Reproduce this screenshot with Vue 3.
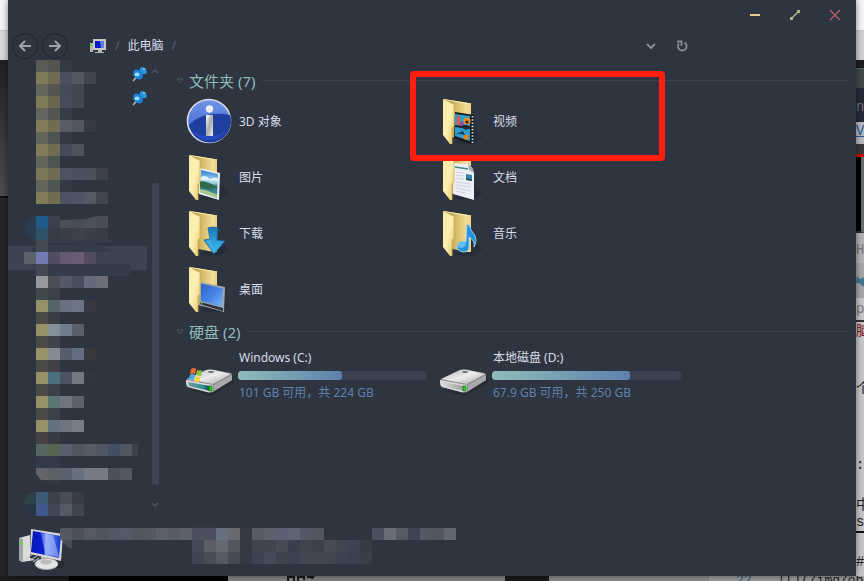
<script setup>
const cell = 12

// Each row: [y, x of the first cell, colours]. An empty string leaves a gap.
const sideRows = [
  [60, 36, ['#5a5b55', '#53544f', '#343a46']],
  [72, 36, ['#7f7a57', '#706b52', '#4b5060', '#535865', '#42454f']],
  [84, 36, ['#65675e', '#56554f', '#464b5a', '#424751']],
  [96, 36, ['#7f7a57', '#6b664f', '#474c5b', '#424751']],
  [108, 36, ['#63665f', '#525550', '#363c48']],
  [120, 36, ['#827c5a', '#726d52', '#575c65', '#525662', '#363a46']],
  [132, 36, ['#62655c', '#4e5550', '#343945']],
  [144, 36, ['#827c5a', '#726d52', '#464b5a', '#4d525e']],
  [156, 36, ['#62655c', '#4e5550']],
  [168, 36, ['#7d775a', '#706b52', '#4c5260', '#4b5060', '#4b515d', '#3e404a']],
  [180, 36, ['#62655c', '#4f5550', '#343945']],
  [192, 36, ['#827c5a', '#726d52', '#4c5261', '#4e5365', '#545b64', '#43464f']],
  [216, 36, ['#1f5c8c', '#3a404e', '#4b4e58', '#494d56', '#4c5059', '#4a4d56']],
  [228, 36, ['#2e5268', '#363c48', '#393e49', '#3f404a', '#3a3f4a', '#393c46']],
  [252, 24, ['#5a636b', '#737bb5', '#514d62', '#655a72', '#6c5a76', '#524c5e']],
  [276, 36, ['#97999d', '#4b4e57', '#545969', '#484e5b', '#646b7c', '#6c6f78']],
  [288, 36, ['#414a4b', '#3d4048']],
  [300, 36, ['#979069', '#536568', '#69717f', '#6c7487', '#383940']],
  [312, 36, ['#4b4b45', '#3c3e45']],
  [324, 36, ['#979069', '#839097', '#6f7e8e', '#5c5e6a']],
  [336, 36, ['#4b4b45', '#40434a']],
  [348, 36, ['#9a926b', '#848b93', '#585d6b', '#646e82', '#38393f']],
  [360, 36, ['#4b4b45', '#3f4147']],
  [372, 36, ['#979069', '#4b717e', '#4d5363', '#737983', '#32363f']],
  [384, 36, ['#4b4b45', '#3a4148']],
  [396, 36, ['#979069', '#5c7472', '#6f7480', '#5c616d']],
  [408, 36, ['#4b4b45', '#3b4146']],
  [420, 36, ['#979069', '#63727f', '#6f7480', '#787e89']],
  [432, 36, ['#454145', '#363b45']],
  [444, 36, ['#566562', '#56664f', '#575f6d', '#505662', '#565b66', '#505662', '#424e63', '#52565f']],
  [456, 36, ['#343a47', '#343a47']],
  [468, 36, ['', '#5b6165', '#5a616e', '#66707f', '#777b86', '#777b86', '#4c515c', '#535862']],
  [492, 36, ['#3e5b75', '#3c414e', '#484d59', '#393d49']],
  [504, 36, ['#40598c', '#404757', '#555b66', '#404550']],
]

const footRows = [
  [528, 72, ['#4c505a', '#555a66', '#50545f', '#535866', '#555a68', '#51565f', '#555965', '#5b606b', '#575b65', '#5c6169', '#4b4f5e', '#4b4f5e', '#667080', '#696b70', '#353945', '#565b65', '#5b606b', '#5c6072', '#5f6472', '#535766', '#53565e', '', '', '', '', '#4c505e', '#696d7a', '#565a63', '#3e4554', '#555966', '#52565e', '#626673']],
  [540, 192, ['#424a59', '#5c5e65', '#666970', '#52565e', '#353945', '#41444f', '#414450', '#474b57', '#393f4d', '#41434e', '#3d404b', '#484a57', '#424653', '#3c4352', '#383b46']],
  [552, 192, ['#3f4453', '#484d58', '#555a66', '#474a55', '#353945', '#3d4353', '#464b59', '#3e4350', '#3b4252', '#444753', '#444753', '#424552', '#3d4150', '#3b4050']],
]

const toCells = (rows) =>
  rows.flatMap(([y, x, colours]) =>
    colours.map((fill, i) => ({ x: x + i * cell, y, fill })).filter((c) => c.fill)
  )
const sideCells = toCells(sideRows)
const footCells = toCells(footRows)

const folders = [
  { name: '3D 对象', icon: 'info' },
  { name: '视频', icon: 'video', marked: true },
  { name: '图片', icon: 'picture' },
  { name: '文档', icon: 'document' },
  { name: '下载', icon: 'download' },
  { name: '音乐', icon: 'music' },
  { name: '桌面', icon: 'desktop' },
]

const drives = [
  { name: 'Windows (C:)', used: 55, info: '101 GB 可用，共 224 GB', system: true },
  { name: '本地磁盘 (D:)', used: 73, info: '67.9 GB 可用，共 250 GB', system: false },
]
</script>

<template>
  <div class="desktop">
    <svg class="defs" width="0" height="0" aria-hidden="true">
      <defs>
        <linearGradient id="flap" x1="0" y1="0" x2="1" y2="1">
          <stop offset="0" stop-color="#f9e9a4" /><stop offset=".5" stop-color="#fdf0b4" /><stop offset="1" stop-color="#e5c867" />
        </linearGradient>
        <linearGradient id="back" x1="0" y1="0" x2="1" y2="0">
          <stop offset="0" stop-color="#a78f48" /><stop offset=".55" stop-color="#d8bf6c" /><stop offset="1" stop-color="#f3e09a" />
        </linearGradient>
        <linearGradient id="infoBlue" x1="0" y1="0" x2="0" y2="1">
          <stop offset="0" stop-color="#6f97ea" /><stop offset="1" stop-color="#3657c4" />
        </linearGradient>
        <linearGradient id="silver" x1="0" y1="0" x2="1" y2="1">
          <stop offset="0" stop-color="#fff" /><stop offset=".5" stop-color="#aaa" /><stop offset="1" stop-color="#eee" />
        </linearGradient>
        <linearGradient id="sky" x1="0" y1="0" x2="0" y2="1">
          <stop offset="0" stop-color="#3c7fd0" /><stop offset=".45" stop-color="#a9dcef" /><stop offset=".6" stop-color="#2c6f7d" /><stop offset="1" stop-color="#4da9b4" />
        </linearGradient>
        <linearGradient id="arrow" x1="0" y1="0" x2="0" y2="1">
          <stop offset="0" stop-color="#1b78b8" /><stop offset="1" stop-color="#3cc0f5" />
        </linearGradient>
        <linearGradient id="screen" x1="0" y1="0" x2="1" y2="1">
          <stop offset="0" stop-color="#2f62c4" /><stop offset=".5" stop-color="#4583e4" /><stop offset="1" stop-color="#7db4f4" />
        </linearGradient>
        <linearGradient id="crt" x1="0" y1="0" x2="1" y2="0">
          <stop offset="0" stop-color="#0716b8" /><stop offset=".42" stop-color="#0a1fd2" /><stop offset=".5" stop-color="#7e9bef" /><stop offset="1" stop-color="#1233d8" />
        </linearGradient>
        <linearGradient id="steel" x1="0" y1="0" x2="1" y2="1">
          <stop offset="0" stop-color="#b4b4b6" /><stop offset=".5" stop-color="#ececec" /><stop offset="1" stop-color="#a4a4a4" />
        </linearGradient>
        <linearGradient id="front" x1="0" y1="0" x2="1" y2="0">
          <stop offset="0" stop-color="#d9d9de" /><stop offset="1" stop-color="#9a9a9f" />
        </linearGradient>
        <linearGradient id="frontC" x1="0" y1="0" x2="1" y2="0">
          <stop offset="0" stop-color="#6c9a9e" /><stop offset=".7" stop-color="#2d8b94" /><stop offset="1" stop-color="#234" />
        </linearGradient>
      </defs>
    </svg>

    <div class="edge edge-left" aria-hidden="true">
      <i class="l-top"></i><i class="l-tab"></i><i class="l-shade"></i><i class="l-dark"></i>
    </div>

    <main class="window">
      <header class="titlebar">
        <button class="win-btn" aria-label="最小化">
          <svg width="12" height="12"><path d="M1 6H11" stroke="#ebcb8b" stroke-width="2" /></svg>
        </button>
        <button class="win-btn" aria-label="最大化">
          <svg width="12" height="12"><path d="M2 10L10 2" stroke="#a3be8c" stroke-width="1.4" /><path d="M1 8h3v3H1zM8 1h3v3H8z" fill="#a3be8c" /></svg>
        </button>
        <button class="win-btn" aria-label="关闭">
          <svg width="12" height="12"><path d="M1 1L11 11M11 1L1 11" stroke="#bf616a" stroke-width="1.2" /></svg>
        </button>
      </header>

      <div class="address">
        <button class="round" aria-label="后退">
          <svg width="16" height="14" fill="none" stroke="#a0a3a9" stroke-width="2"><path d="M14 7H3M8 2L3 7L8 12" /></svg>
        </button>
        <button class="round" aria-label="前进">
          <svg width="16" height="14" fill="none" stroke="#a0a3a9" stroke-width="2"><path d="M2 7H13M8 2L13 7L8 12" /></svg>
        </button>
        <nav class="crumbs">
          <svg width="18" height="16" viewBox="0 0 18 16">
            <path d="M1 5h3v9H1z" fill="#b5b5b0" /><path d="M1 6h2v2H1z" fill="#38e63c" />
            <path d="M4 1h13v11H4z" fill="#c9c8c0" /><path d="M6 3h9v7H6z" fill="#0a18c8" /><path d="M11 3h4v7h-3z" fill="#5d7ce6" />
            <path d="M9 12h4v2h2v1H6v-1h3z" fill="#b7b6af" />
          </svg>
          <span class="slash">/</span>
          <a href="#">此电脑</a>
          <span class="slash">/</span>
        </nav>
        <button class="tool" aria-label="历史记录">
          <svg width="12" height="12" fill="none" stroke="#898c92" stroke-width="2"><path d="M2 4L6 8L10 4" /></svg>
        </button>
        <button class="tool" aria-label="刷新">
          <svg width="12" height="12" fill="none" stroke="#898c92" stroke-width="1.8"><path d="M8.500 2.500A4.300 4.300 0 1 1 3 3.500M1 1.500H5.500V6" /></svg>
        </button>
      </div>

      <div class="body">
        <aside class="sidebar">
          <svg class="mosaic" width="139" height="462" viewBox="8 60 139 462" shape-rendering="crispEdges">
            <rect x="4" y="246" width="143" height="24" rx="2" fill="#3c4353" />
            <path d="M36 216A11 12 0 0 0 36 240z" fill="#2a3c50" shape-rendering="auto" />
            <path d="M30 252C34 242 60 246 92 243C104 247 112 250 116 252zM32 264H130V272Q130 276 126 276H32L40 270z" fill="#343b49" shape-rendering="auto" />
            <path d="M36 240h12v12H36zM36 264h12v12H36z" fill="#444854" />
            <path d="M48 240h60l9 1-8 2H48z" fill="#353b48" />
            <path d="M36 468h12v12h-7l-5-6z" fill="#626469" shape-rendering="auto" />
            <path d="M41 480h19v6z" fill="#353b46" shape-rendering="auto" />
            <path d="M132 444h6v12h-6z" fill="#3e424c" />
            <path d="M36 492Q24 493 24 504H36z" fill="#2e4249" shape-rendering="auto" />
            <path d="M36 516Q25 515 24 504H36z" fill="#263846" shape-rendering="auto" />
            <rect v-for="(c, i) in sideCells" :key="i" :x="c.x" :y="c.y" width="12" height="12" :fill="c.fill" />
            <path d="M60 216h36l-10 3-26 1z" fill="#2e3440" shape-rendering="auto" />
          </svg>
          <div class="pins">
            <svg v-for="n in 2" :key="n" width="16" height="16" viewBox="0 0 16 16">
              <path d="M2 15L7 9" stroke="#b9bcc0" stroke-width="1.5" />
              <path d="M7 6L10 3L14 6L10 10z" fill="#176db5" />
              <path d="M9 2Q11 0 14 2Q17 5 15 8L12 8Q8 6 9 2z" fill="#2a93e0" />
              <ellipse cx="7" cy="8.500" rx="5.500" ry="4.200" transform="rotate(45 7 8.500)" fill="#1b84d8" />
              <ellipse cx="6" cy="8.500" rx="2.500" ry="2" fill="#9fdcff" /><circle cx="13" cy="3" r="1" fill="#8ccdf7" />
            </svg>
          </div>
          <div class="scroll">
            <svg width="8" height="6" fill="none" stroke="#454c5b" stroke-width="2"><path d="M1 5L4 2L7 5" /></svg>
            <i class="thumb"></i>
            <svg width="8" height="6" fill="none" stroke="#454c5b" stroke-width="2"><path d="M1 1L4 4L7 1" /></svg>
          </div>
        </aside>

        <section class="content">
          <h2 class="group">
            <svg width="8" height="6" fill="none" stroke="#4a5161"><path d="M1 1H7L4 5z" /></svg>
            文件夹 (7)
          </h2>
          <div class="tiles">
            <a v-for="f in folders" :key="f.name" class="tile" href="#">
              <svg width="48" height="48" viewBox="0 0 48 48">
                <template v-if="f.icon === 'info'">
                  <circle cx="23" cy="24" r="21.500" fill="url(#infoBlue)" stroke="#dcdde2" stroke-width="1.600" />
                  <path d="M3 28C14 17 28 15 44 18A21 21 0 0 1 4 31z" fill="#1f3f9f" />
                  <path d="M5 33A21 21 0 0 0 42 31C35 41 15 42 5 33z" fill="#2c4fd0" opacity=".7" />
                  <circle cx="23.500" cy="12" r="3.700" fill="#ededee" /><path d="M20 18h7v21h-7z" fill="url(#silver)" />
                </template>
                <template v-else>
                  <path d="M14 46L34 47L42 40L33 30z" fill="#1f242d" opacity=".4" />
                  <path d="M4 2L28 6V43L12 40z" fill="url(#back)" />
                  <path d="M4 2L28 6V7L5 3z" fill="#fff0b5" />
                  <path d="M28 6h3v37h-3z" fill="#ecd589" />
                  <g v-if="f.icon === 'picture'">
                    <path d="M14 15L34 20L33 47L13 41z" fill="#e9eef0" />
                    <path d="M15 17L32 21L31 45L14 39z" fill="url(#sky)" />
                    <path d="M15 24Q20 21 24 26Q29 23 32 26V28L15 27z" fill="#e1f3f5" />
                    <path d="M14 28Q22 28 31 34L24 36L14 34z" fill="#2f6b48" />
                    <path d="M14 36Q22 37 31 42V45L14 39z" fill="#a9c98b" />
                  </g>
                  <g v-else-if="f.icon === 'video'">
                    <path d="M15 15L34 18V45L31 47L14 41z" fill="#151b20" />
                    <path d="M15 17L30 19V30L15 28z" fill="#2c9ed0" /><path d="M15 30L30 32V44L15 39z" fill="#2c9ed0" />
                    <circle cx="27" cy="24" r="3.600" fill="#ee8b22" /><circle cx="27" cy="25" r="1.500" fill="#1b2024" />
                    <path d="M17 20l3-2v10h-3z" fill="#e1584a" /><path d="M20 25l3-1 1 4-4 1z" fill="#8b4fa0" /><path d="M23 28h4l4 2-5 3-4-2z" fill="#242a2d" />
                    <circle cx="26" cy="40" r="2.600" fill="#e6811c" /><path d="M16 37l7-3 2 4-4-1z" fill="#173c59" />
                    <path d="M32.500 19V46" stroke="#d6ded2" stroke-width="1.800" stroke-dasharray="1.600 1.600" />
                  </g>
                  <g v-else-if="f.icon === 'document'">
                    <path d="M14 10L28 11Q33 14 34 20V47L13 41z" fill="#eeeff6" />
                    <path d="M28 11Q33 14 34 20L29 17z" fill="#a7aab4" />
                    <path d="M15 14L28 16" stroke="#4a8a83" stroke-width="1.500" />
                    <path d="M26 21l6 1v6l-6-1z" fill="#3486b0" /><path d="M26 25l6 1v2l-6-1z" fill="#285b43" />
                    <path d="M16 19l8 1M16 22l8 1M16 25l8 1M16 29l15 2M16 32l15 2M16 35l15 3M16 38l10 2" stroke="#c9ccd6" stroke-width=".9" />
                  </g>
                  <g v-else-if="f.icon === 'download'">
                    <path d="M22 19Q27 17 32 19L31 31L39 32L28 45L18 31L24 30z" fill="url(#arrow)" stroke="#185f98" stroke-width=".8" />
                    <path d="M23 20Q25 27 27 42L20 32L25 31z" fill="#54b9ef" opacity=".5" />
                  </g>
                  <g v-else-if="f.icon === 'music'">
                    <path d="M27 15L29 16Q31 22 34 25Q38 31 34 38Q35 31 29 28V38Q29 43 23 43Q17 42 17 37Q19 31 26 33z" fill="#2492df" stroke="#9cd4f5" stroke-width=".9" />
                    <ellipse cx="22" cy="36" rx="4" ry="2.500" fill="#66c0f1" transform="rotate(-15 22 36)" />
                  </g>
                  <g v-else>
                    <path d="M14 17L39 22L38 47L13 40z" fill="#9fa7b0" />
                    <path d="M15 18.500L37 23.500L36 42L15 36z" fill="url(#screen)" />
                    <path d="M14 37L37 43V46L14 39z" fill="#2a3035" /><circle cx="15.500" cy="37.500" r="1.300" fill="#70b63c" />
                  </g>
                  <path d="M3 2L14 8V29L12 31V47H10L3 38z" fill="url(#flap)" />
                  <path d="M14 8V29L12 31V47" fill="none" stroke="#cfae54" stroke-width=".8" />
                </template>
              </svg>
              <span class="label">{{ f.name }}</span>
              <i v-if="f.marked" class="marker"></i>
            </a>
          </div>

          <h2 class="group second">
            <svg width="8" height="6" fill="none" stroke="#4a5161"><path d="M1 1H7L4 5z" /></svg>
            硬盘 (2)
          </h2>
          <div class="tiles drives">
            <a v-for="d in drives" :key="d.name" class="drive" href="#">
              <svg width="48" height="36" viewBox="0 0 48 36">
                <path d="M6 26L24 31L48 18V13z" fill="#1d2129" opacity=".5" />
                <path d="M0 15L20 5Q24 4 28 5L45 8Q46 9 46 15L27 27Q24 28 21 27L2 22Q0 21 0 15z" fill="#8c8c8f" />
                <path d="M1 14L20 5Q24 4 28 5L45 9L27 19z" fill="url(#steel)" />
                <path d="M46 10L28 20V26L46 15z" fill="#a9a9ab" />
                <path d="M0 15L27 20V26Q24 28 21 27L2 22Q0 21 0 15z" fill="#dadadc" />
                <path d="M2 17L24 21V26L3 21z" :fill="d.system ? 'url(#frontC)' : 'url(#front)'" />
                <path d="M23 21h3v5h-3z" fill="#1fdc12" stroke="#176812" stroke-width=".7" />
                <ellipse cx="25" cy="7" rx="3" ry="1" fill="#6c6c70" />
                <g v-if="d.system">
                  <path d="M5 4Q8 2 10 4L9 9Q6 8 4 9z" fill="#ee6a2b" /><path d="M11 5Q14 6 16 5L15 11Q12 11 10 10z" fill="#8cc63e" />
                  <path d="M4 10Q6 8 9 10L8 15Q5 14 2 15z" fill="#49a7ea" /><path d="M10 11Q12 12 15 12L13 17Q10 17 8 16z" fill="#fbd045" />
                </g>
              </svg>
              <span class="drive-info">
                <span class="drive-name">{{ d.name }}</span>
                <span class="track" role="progressbar" :aria-valuenow="d.used">
                  <span class="fill" :style="{ width: d.used + '%' }"></span>
                </span>
                <span class="free">{{ d.info }}</span>
              </span>
            </a>
          </div>
        </section>
      </div>

      <footer class="details">
        <svg class="pc" width="56" height="54" viewBox="8 522 56 54">
          <ellipse cx="55" cy="564" rx="10" ry="5" fill="#1d222b" opacity=".6" />
          <path d="M19 538L30 535V558L35 560L22 562L19 560z" fill="#dcdcdd" /><path d="M19 538L23 539V562L19 560z" fill="#a3a4a6" />
          <path d="M20 542l3 1v2l-3-1z" fill="#55dc38" />
          <path d="M25 559l8-5M29 561l8-5M33 562l6-4" stroke="#c9c9ca" stroke-width="1" />
          <path d="M41 556h11l1 9H41z" fill="#b4b4b6" />
          <ellipse cx="46.500" cy="564" rx="11.500" ry="5.500" fill="#e5e5e6" stroke="#a6a6a8" /><ellipse cx="46" cy="562" rx="6" ry="2.500" fill="#bdbdbf" />
          <path d="M31 529L63 534L61 561L30 554z" fill="#d6d6d6" />
          <path d="M33 531L61 536L59 558L31 552z" fill="url(#crt)" />
          <path d="M41 533L53 535L59 557L45 554z" fill="#b7c9fb" opacity=".5" />
        </svg>
        <svg class="foot-mosaic" width="448" height="54" viewBox="8 522 448 54" shape-rendering="crispEdges">
          <path d="M62 540h10v8Q65 548 62 540z" fill="#484d55" /><path d="M60 529l2-1h10v12H60z" fill="#555a62" />
          <path d="M192 524l24-1v5h-24z" fill="#333944" />
          <rect v-for="(c, i) in footCells" :key="i" :x="c.x" :y="c.y" width="12" height="12" :fill="c.fill" />
          <path d="M360 552h12v8q0 4-5 4h-7z" fill="#3b3f4b" shape-rendering="auto" />
        </svg>
      </footer>
    </main>

    <div class="edge edge-right" aria-hidden="true">
      <i class="r-top"></i><i class="r-tab"></i><i class="r-black"></i><i class="r-moss"></i>
      <i class="r-navy">nc</i><i class="r-link">V</i><i class="r-red"></i><i class="r-media"></i>
      <i class="r-head">He</i>
      <i class="r-bird"><svg width="8" height="14"><path d="M1 2L4 5L8 3V13L3 9H0z" fill="#3f7890" /></svg></i>
      <i class="r-post">po</i><i class="r-han">脑</i><i class="r-line">个</i><i class="r-colon">:</i>
      <i class="r-short">中</i><i class="r-sv">sv</i><i class="r-last">#</i>
    </div>

    <div class="below" aria-hidden="true">
      <i class="b-dim"></i><i class="b-black"></i>
      <i class="b-page"><svg width="30" height="5"><path d="M0 0h8v5H6V2H2v3H0zM10 0h8v4h-2V2h-4v3h-2zM20 0h8l-2 3h-2V2h-4z" fill="#1c1c1c" /></svg></i>
      <i class="b-gap"></i><i class="b-pale"></i>
      <i class="b-code"><b>22</b><span>![](/img/ob</span></i>
    </div>
  </div>
</template>

<style>
body {
  margin: 0;
  background: #2e3440;
}
</style>

<style scoped>
* {
  box-sizing: border-box;
}
.desktop {
  display: grid;
  grid-template-columns: 8px minmax(0, 1fr) 8px;
  grid-template-rows: minmax(0, 1fr) 5px;
  min-height: 100vh;
  font-family: "Noto Sans", "Noto Sans CJK SC", sans-serif;
  font-size: 12px;
  line-height: 16px;
  color: #d8dee9;
}
.defs {
  position: absolute;
}
svg {
  display: block;
  flex: none;
}
i {
  font-style: normal;
}
button {
  display: flex;
  align-items: center;
  justify-content: center;
  padding: 0;
  border: 0;
  background: none;
  cursor: pointer;
}
a {
  color: inherit;
  text-decoration: none;
}

.window {
  position: relative;
  z-index: 1;
  display: flex;
  flex-direction: column;
  min-width: 0;
  background: #2e3440;
  border-radius: 0 0 3px 3px;
  box-shadow: 0 0 6px rgba(0, 0, 0, 0.5);
}
.titlebar {
  display: flex;
  justify-content: flex-end;
  height: 31px;
  padding: 0 1px 1px 0;
}
.win-btn {
  width: 40px;
}
.address {
  display: flex;
  align-items: center;
  height: 29px;
  padding: 0 161px 0 4px;
  gap: 4px;
}
.round {
  width: 26px;
  height: 26px;
  border: 1px solid #20252e;
  border-radius: 50%;
}
.crumbs {
  display: flex;
  flex: 1;
  align-items: center;
  gap: 8px;
  padding-left: 17px;
}
.slash {
  color: #5b6374;
}
.tool {
  width: 27px;
  height: 26px;
}
.body {
  display: flex;
  flex: 1;
}
.sidebar {
  display: grid;
  grid-template-columns: 139px 8px;
  column-gap: 4px;
  align-items: start;
}
.mosaic,
.pins {
  grid-area: 1 / 1;
}
.pins {
  display: grid;
  justify-self: end;
  gap: 8px;
  padding-top: 6px;
}
.scroll {
  display: flex;
  flex-direction: column;
  align-items: center;
  align-self: stretch;
  padding: 8px 0 14px;
}
.thumb {
  flex: 1;
  width: 7px;
  margin: 109px 0 17px;
  border-radius: 2px;
  background: #3c4353;
}
.content {
  flex: 1;
  min-width: 0;
  padding: 8px 7px 0 17px;
}
.group {
  display: flex;
  align-items: center;
  gap: 5px;
  height: 25px;
  margin: 0;
  font-size: 15px;
  font-weight: 400;
  line-height: 24px;
  color: #8fbcbb;
}
.group::after {
  content: "";
  flex: 1;
  height: 1px;
  margin-left: 2px;
  background: #3c4353;
}
.second {
  margin-top: 2px;
}
.tiles {
  display: grid;
  grid-template-columns: repeat(auto-fill, 254px);
  padding-left: 10px;
}
.tile {
  position: relative;
  display: flex;
  align-items: center;
  gap: 5px;
  height: 56px;
}
.label {
  padding-top: 2px;
}
.marker {
  position: absolute;
  top: -22px;
  left: -30px;
  z-index: 1;
  width: 255px;
  height: 90px;
  border: 6px solid #ff1e10;
  border-radius: 4px;
}
.drives {
  padding-top: 6px;
}
.drive {
  display: flex;
  align-items: flex-end;
  gap: 4px;
}
.drive-info {
  display: flex;
  flex: 1;
  flex-direction: column;
  gap: 5px;
  padding-right: 13px;
}
.drive-name,
.free {
  padding-left: 1px;
}
.free {
  color: #5e81ac;
}
.track {
  display: block;
  height: 9px;
  overflow: hidden;
  border-radius: 3px;
  background: #3b4252;
}
.fill {
  display: block;
  height: 100%;
  border-radius: 3px;
  background: linear-gradient(90deg, #8fbcbb, #5e81ac);
}
.details {
  display: grid;
  height: 54px;
}
.pc,
.foot-mosaic {
  grid-area: 1 / 1;
}

.edge {
  display: flex;
  flex-direction: column;
  overflow: hidden;
}
.edge i {
  flex: none;
  overflow: hidden;
  white-space: nowrap;
}
.l-top {
  height: 31px;
  background: #f4f4f4;
  border-bottom: 1px solid #c9c9c9;
}
.l-tab {
  height: 29px;
  background: #d8d9db;
}
.l-shade {
  height: 138px;
  background: linear-gradient(#202123, #4b4c4e);
  border-bottom: 2px solid #0d0d0e;
}
.edge-left .l-dark {
  flex: 1;
  background: #252628;
}
.edge-right {
  background: #c6c6c6;
  color: #1c1c1c;
  font-family: "Liberation Mono", "Noto Sans CJK SC", monospace;
  font-size: 14px;
  line-height: 18px;
}
.r-top {
  height: 31px;
  background: #f4f4f4;
  border-bottom: 1px solid #c9c9c9;
}
.r-tab {
  height: 29px;
  background: #d0d1d3;
}
.r-black {
  height: 9px;
  background: #1c1c1c;
  border-bottom: 1px solid #5b6161;
}
.r-moss {
  height: 19px;
  background: #404844;
}
.r-navy {
  height: 34px;
  padding-top: 10px;
  background: #262a39;
  color: #6d717c;
}
.r-link {
  height: 22px;
  background: #b9b9bd;
  color: #26559b;
  text-decoration: underline;
}
.r-red {
  height: 13px;
  background: #3a3a3a;
  border-bottom: 3px solid #cf0808;
}
.r-media {
  height: 76px;
  background: #000;
  border-right: 3px solid #66706b;
  border-bottom: 2px solid #2a2e3c;
}
.r-head {
  height: 30px;
  padding-top: 8px;
  background: #b2b2b2;
  color: #777;
}
.r-bird {
  height: 35px;
  padding-top: 11px;
  background: #a6a6a6;
}
.r-post {
  height: 24px;
  padding-top: 2px;
  color: #777;
  border-bottom: 2px solid #333;
}
.r-han {
  height: 58px;
  color: #7b1a2a;
}
.r-line {
  height: 76px;
}
.r-colon {
  height: 40px;
}
.r-short {
  height: 17px;
}
.r-sv {
  height: 20px;
  border-bottom: 2px solid #111;
}
.edge-right .r-last {
  flex: 1;
  padding-top: 20px;
}
.below {
  display: flex;
  grid-column: 1 / -1;
  height: 5px;
  overflow: hidden;
}
.b-dim {
  flex: 75;
  background: #1c1c1e;
}
.b-black {
  flex: 174;
  background: #000;
}
.b-page {
  flex: 238;
  padding-left: 59px;
  background: #858282;
  min-width: 0;
}
.b-dim,
.b-black,
.b-page,
.b-gap,
.b-pale {
  flex-basis: 0;
}
.b-gap {
  flex: 48;
  background: #1a1a1a;
}
.b-pale {
  flex: 174;
  background: #8d8a8a;
}
.b-code {
  display: flex;
  flex: none;
  gap: 26px;
  width: 155px;
  padding-left: 27px;
  background: #9b9999;
  color: #222;
  font: 13px/10px "Liberation Mono", monospace;
  white-space: nowrap;
}
.b-code b {
  font-weight: 400;
  color: #2c6077;
}
</style>
